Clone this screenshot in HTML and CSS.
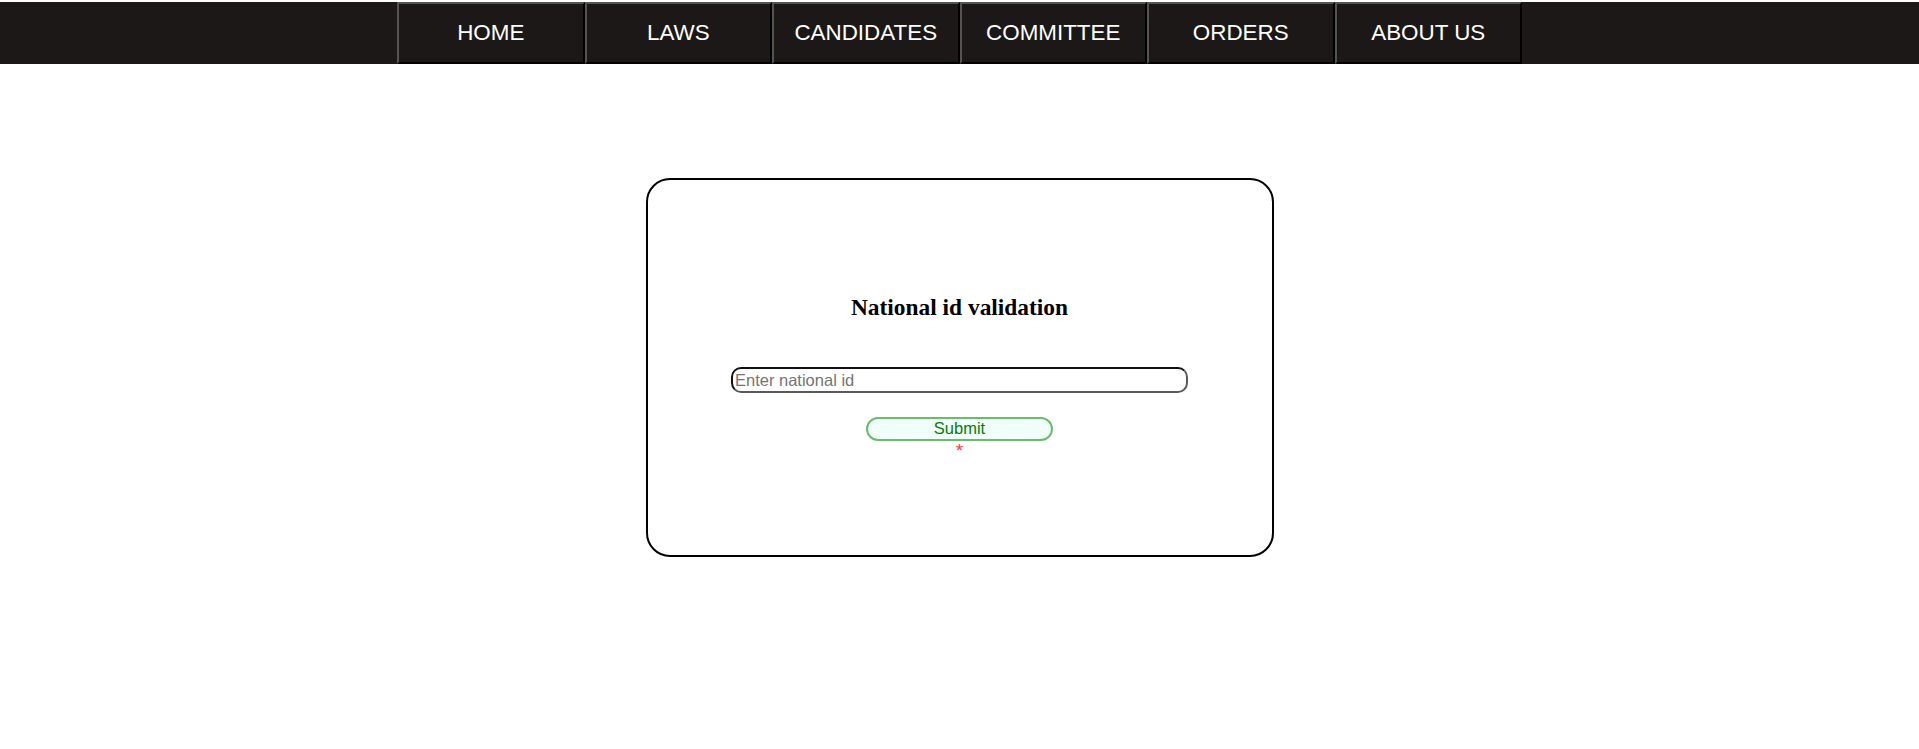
FILE: index.html
```html
<!DOCTYPE html>
<html lang="en">
<head>
<meta charset="utf-8">
<title>National id validation</title>
<link rel="stylesheet" href="styles.css">
</head>
<body>
<nav class="topnav">
  <ul class="menu">
    <li class="menu-item"><a href="#">HOME</a></li>
    <li class="menu-item"><a href="#">LAWS</a></li>
    <li class="menu-item"><a href="#">CANDIDATES</a></li>
    <li class="menu-item"><a href="#">COMMITTEE</a></li>
    <li class="menu-item"><a href="#">ORDERS</a></li>
    <li class="menu-item"><a href="#">ABOUT US</a></li>
  </ul>
</nav>
<main class="page">
  <form class="card">
    <h2 class="title">National id validation</h2>
    <input class="id-input" type="text" placeholder="Enter national id">
    <button class="submit" type="button">Submit</button>
    <span class="required">*</span>
  </form>
</main>
</body>
</html>
```
FILE: styles.css
```css
html, body {
  margin: 0;
  padding: 0;
  background: #ffffff;
}
body {
  font-family: "Liberation Sans", Arial, sans-serif;
}
.topnav {
  margin-top: 2px;
  height: 62px;
  background: #1c1817;
}
.menu {
  list-style: none;
  margin: 0 auto;
  padding: 0;
  width: 1125px;
  height: 62px;
  display: grid;
  grid-template-columns: repeat(6, 1fr);
}
.menu-item {
  box-sizing: border-box;
  height: 62px;
  border-style: solid;
  border-width: 2px;
  border-color: #545454 #000000 #000000 #545454;
  display: flex;
  align-items: center;
  justify-content: center;
}
.menu-item a {
  color: #ffffff;
  text-decoration: none;
  font-size: 22.4px;
  line-height: 1;
}
.page {
  padding-top: 114px;
  display: flex;
  justify-content: center;
}
.card {
  box-sizing: border-box;
  width: 628px;
  height: 379px;
  border: 2px solid #000000;
  border-radius: 24px;
  display: flex;
  flex-direction: column;
  align-items: center;
  padding-top: 113px;
}
.title {
  margin: 0;
  font-family: "Liberation Serif", "Times New Roman", serif;
  font-weight: bold;
  font-size: 23.4px;
  line-height: 28px;
  color: #000000;
}
.id-input {
  box-sizing: border-box;
  margin-top: 46px;
  width: 457px;
  height: 26px;
  padding: 0 2px;
  border-style: solid;
  border-width: 2px;
  border-color: #111111 #5a5a5a #5a5a5a #111111;
  border-radius: 10px;
  font-family: "Liberation Sans", Arial, sans-serif;
  font-size: 16.5px;
  outline: none;
  background: #ffffff;
}
.id-input::placeholder {
  color: #757575;
}
.submit {
  box-sizing: border-box;
  margin-top: 24px;
  width: 187px;
  height: 24px;
  padding: 0 0 1px;
  border: 2px solid #6dbb6d;
  border-radius: 12px;
  background: #f0fffa;
  color: #087a08;
  font-family: "Liberation Sans", Arial, sans-serif;
  font-size: 16.5px;
  line-height: 1;
}
.required {
  margin-top: 1px;
  color: #ff3b3b;
  font-size: 19px;
  line-height: 18px;
  height: 18px;
}
```
